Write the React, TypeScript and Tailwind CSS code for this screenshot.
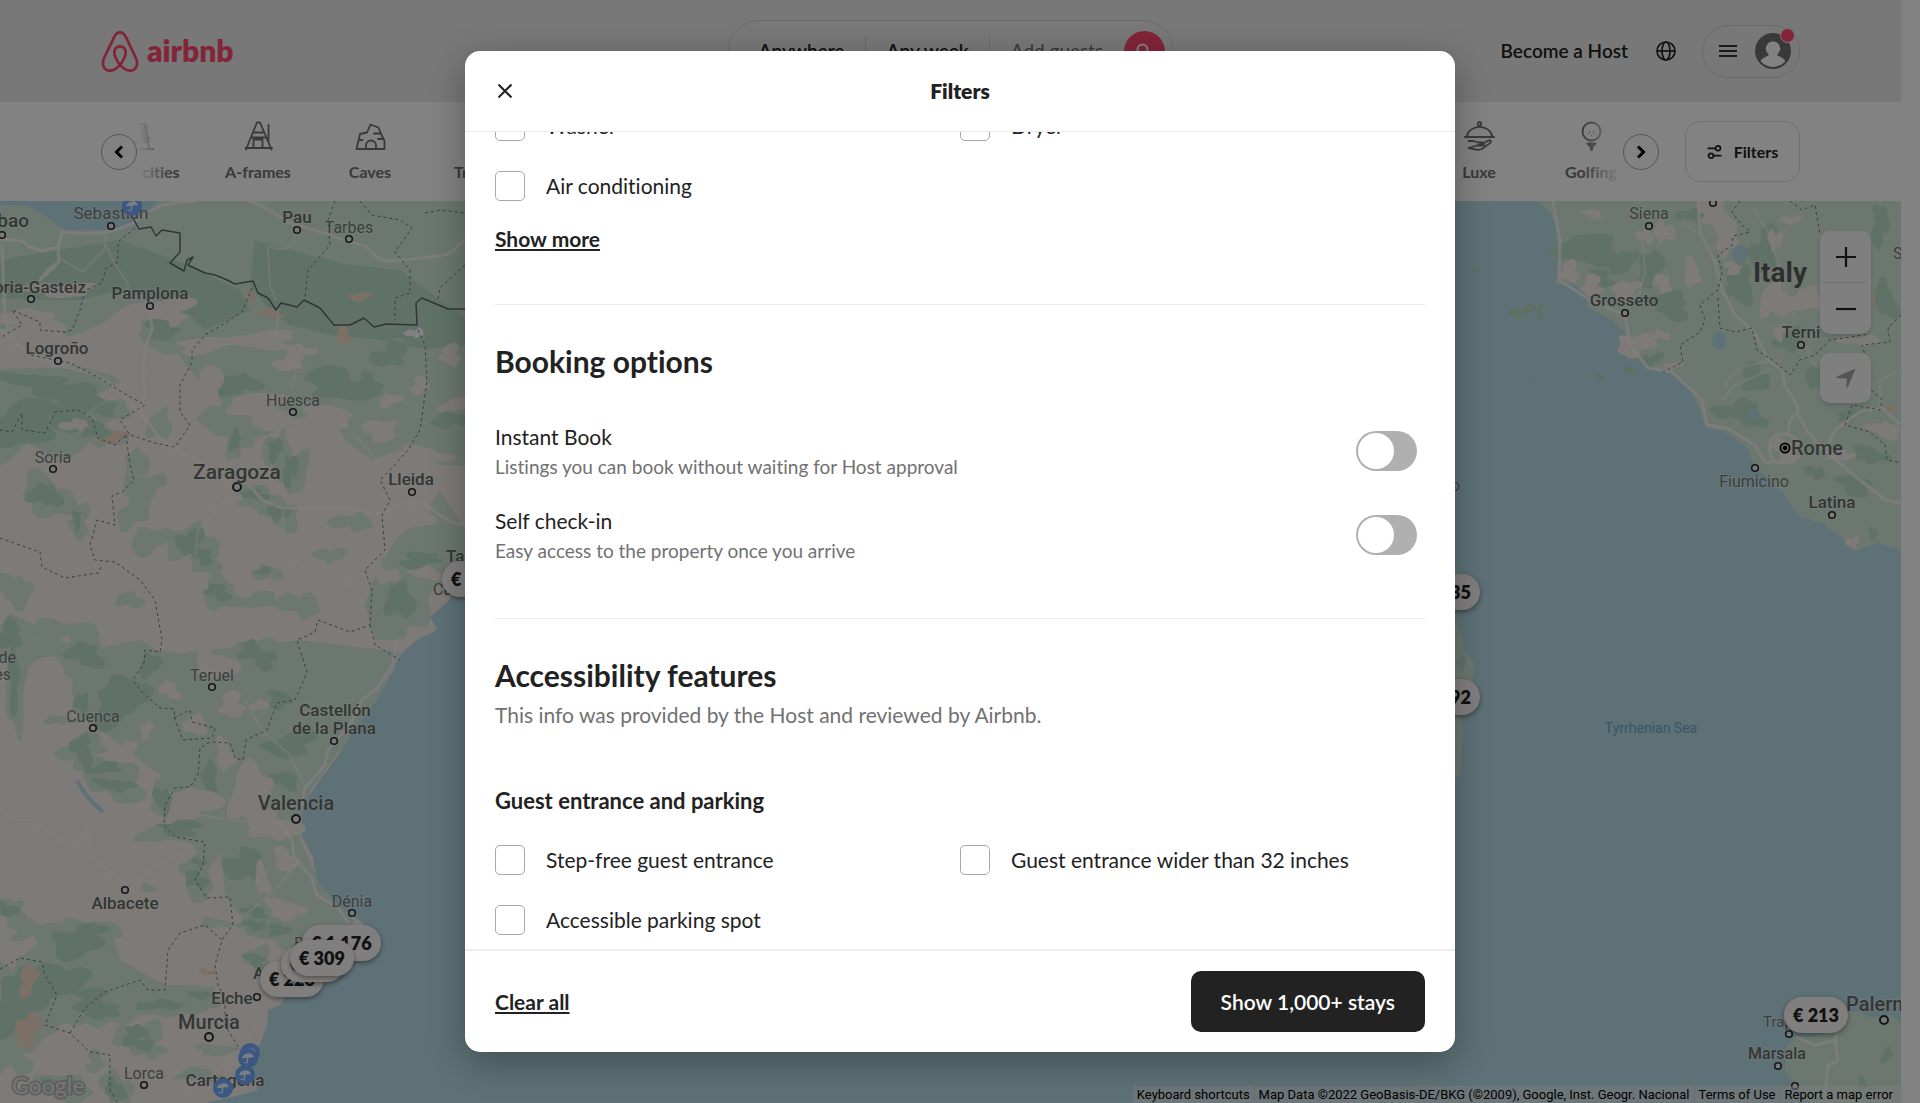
import type { ReactNode } from "react";

/* ---------- map data (map canvas units, top edge at y = 201) ---------- */

type Anchor = "start" | "middle" | "end";
type Label = [text: string, x: number, y: number, size: number, weight: number, anchor?: Anchor];

const LABELS: Label[] = [
  ["Bilbao", 29, 220, 19, 500, "end"],
  ["Sebastián", 111, 213, 17, 400],
  ["Pau", 297, 217, 17, 500],
  ["Tarbes", 349, 227, 16, 400],
  ["Vitoria-Gasteiz", 86, 287, 17, 500, "end"],
  ["Pamplona", 150, 293, 17, 500],
  ["Logroño", 57, 348, 17, 500],
  ["Huesca", 293, 400, 16, 400],
  ["Soria", 53, 457, 16, 400],
  ["Zaragoza", 237, 472, 21, 500],
  ["Lleida", 411, 479, 17, 500],
  ["Tarragona", 446, 556, 17, 500, "start"],
  ["Cambrils", 433, 589, 16, 400, "start"],
  ["Alcalá de", 16, 657, 16, 400, "end"],
  ["Henares", 11, 674, 16, 400, "end"],
  ["Teruel", 212, 675, 16, 400],
  ["Cuenca", 93, 716, 16, 400],
  ["Castellón", 335, 710, 17, 500],
  ["de la Plana", 334, 728, 17, 500],
  ["Valencia", 296, 803, 20, 500],
  ["Albacete", 125, 903, 17, 500],
  ["Dénia", 352, 901, 16, 400],
  ["Benidorm", 294, 943, 16, 400, "start"],
  ["Alicante", 253, 973, 17, 500, "start"],
  ["Elche", 232, 998, 17, 500],
  ["Murcia", 209, 1022, 20, 500],
  ["Lorca", 144, 1073, 16, 400],
  ["Cartagena", 225, 1080, 17, 500],
  ["Siena", 1649, 213, 16, 400],
  ["Grosseto", 1624, 300, 17, 500],
  ["Terni", 1801, 332, 17, 500],
  ["Rome", 1791, 448, 20, 500, "start"],
  ["Fiumicino", 1754, 481, 16, 400],
  ["Latina", 1832, 502, 17, 500],
  ["Spoleto", 1893, 253, 16, 400, "start"],
  ["Ajaccio", 1460, 485, 16, 400, "end"],
  ["Trapani", 1763, 1022, 15, 400, "start"],
  ["Marsala", 1777, 1053, 16, 500],
  ["Palermo", 1846, 1004, 20, 500, "start"],
];

const TOWNS: [number, number][] = [
  [2, 235], [111, 226], [297, 230], [349, 239], [31, 299], [150, 306], [58, 361], [293, 412],
  [53, 469], [412, 492], [212, 687], [93, 728], [334, 741], [125, 890], [352, 913], [257, 997],
  [144, 1085], [1649, 226], [1713, 203], [1625, 313], [1801, 345], [1755, 468], [1832, 515],
  [1789, 1034], [1778, 1066], [1795, 1086],
];

const CITIES: [number, number][] = [[237, 487], [296, 819], [209, 1037], [1884, 1020]];

const DARK = "#bddfca";
const MID = "#d3ead9";
const TAN = "#f7f0ec";
const PALE = "#ffffff";
const ROSE = "#f3dac9";
const WATER = "#b6dde8";

type Patch = [x: number, y: number, rx: number, ry: number, fill: string];

const SPAIN_PATCHES: Patch[] = [
  [30, 320, 30, 12, TAN], [60, 290, 28, 9, TAN], [165, 312, 32, 12, TAN], [70, 395, 36, 14, DARK],
  [20, 425, 34, 26, DARK], [70, 420, 26, 12, DARK], [30, 380, 30, 8, DARK], [75, 425, 12, 7, TAN],
  [112, 437, 14, 7, ROSE], [106, 410, 12, 6, DARK], [162, 330, 18, 9, DARK], [205, 345, 26, 9, TAN],
  [265, 340, 36, 8, TAN], [290, 362, 14, 10, TAN], [238, 385, 20, 12, DARK], [340, 385, 34, 16, DARK],
  [370, 385, 9, 14, DARK], [390, 355, 18, 12, DARK], [300, 350, 14, 6, TAN], [205, 390, 18, 22, TAN],
  [262, 410, 34, 16, TAN], [320, 420, 32, 14, TAN], [390, 400, 12, 6, TAN], [420, 385, 9, 8, TAN],
  [380, 430, 20, 9, TAN], [425, 455, 24, 8, TAN], [450, 355, 12, 9, TAN], [452, 420, 18, 9, DARK],
  [456, 405, 14, 8, TAN], [270, 313, 11, 5, ROSE], [251, 297, 4, 8, ROSE], [360, 297, 9, 5, ROSE],
  [343, 335, 8, 8, ROSE], [415, 333, 8, 5, PALE], [235, 440, 6, 10, DARK], [275, 450, 6, 14, DARK],
  [290, 470, 7, 16, DARK], [160, 425, 10, 18, MID], [97, 432, 12, 8, DARK], [45, 495, 15, 13, DARK],
  [77, 520, 5, 9, DARK], [135, 470, 12, 22, MID], [150, 485, 16, 10, MID], [135, 510, 16, 18, MID],
  [150, 540, 22, 12, MID], [190, 542, 12, 14, DARK], [203, 556, 10, 8, DARK],
  [255, 495, 14, 5, DARK], [278, 512, 10, 9, DARK], [264, 571, 7, 4, DARK], [218, 592, 12, 8, DARK],
  [260, 600, 16, 10, MID], [300, 605, 18, 14, MID], [352, 522, 18, 10, MID], [330, 555, 14, 8, MID],
  [420, 515, 24, 10, TAN], [440, 510, 10, 8, MID], [385, 575, 12, 10, TAN], [425, 572, 16, 8, TAN],
  [400, 600, 12, 22, DARK], [420, 560, 22, 7, DARK], [15, 590, 16, 18, MID], [60, 630, 30, 12, MID],
  [10, 635, 14, 12, DARK], [130, 600, 12, 9, MID], [330, 625, 14, 10, TAN],
  [14, 680, 6, 30, DARK], [85, 655, 18, 12, DARK], [120, 700, 24, 26, DARK], [82, 703, 6, 12, DARK],
  [60, 720, 14, 5, MID], [80, 745, 12, 8, DARK], [85, 758, 8, 12, DARK], [105, 768, 14, 7, DARK],
  [128, 750, 9, 9, TAN], [146, 730, 6, 9, TAN], [115, 785, 18, 7, DARK],
  [150, 665, 12, 10, DARK], [170, 690, 10, 9, TAN], [215, 665, 18, 16, TAN], [232, 705, 14, 11, TAN],
  [195, 725, 15, 8, TAN], [250, 650, 12, 8, DARK], [260, 705, 8, 6, TAN], [225, 755, 10, 14, TAN],
  [280, 700, 14, 8, DARK], [290, 745, 22, 14, DARK], [285, 780, 12, 10, DARK], [265, 660, 14, 8, DARK],
  [210, 780, 9, 16, DARK], [250, 790, 24, 22, TAN], [270, 825, 26, 16, TAN], [190, 805, 24, 20, TAN],
  [163, 800, 8, 14, DARK], [180, 828, 24, 7, DARK], [245, 865, 16, 20, DARK], [196, 880, 11, 9, DARK],
  [200, 862, 7, 5, DARK], [218, 878, 7, 20, TAN], [262, 880, 8, 14, TAN], [285, 860, 10, 14, TAN],
  [255, 912, 12, 6, DARK], [278, 930, 9, 8, DARK], [285, 910, 16, 12, TAN], [255, 925, 12, 5, DARK],
  [215, 923, 13, 6, MID], [255, 960, 10, 7, DARK], [235, 975, 18, 10, TAN], [8, 910, 9, 8, DARK],
  [148, 888, 7, 5, MID], [28, 930, 16, 9, MID], [75, 945, 20, 18, DARK], [90, 930, 14, 8, DARK],
  [60, 980, 22, 20, DARK], [95, 1000, 26, 10, DARK], [20, 1000, 22, 34, DARK], [28, 980, 9, 15, ROSE],
  [28, 1030, 13, 16, ROSE], [15, 1060, 16, 14, MID], [70, 1040, 20, 12, TAN], [130, 1000, 26, 8, MID],
  [160, 1005, 20, 6, DARK], [105, 1012, 14, 8, DARK], [135, 1035, 12, 10, DARK], [145, 1045, 8, 8, DARK],
  [200, 995, 10, 5, DARK], [215, 1050, 16, 7, MID], [165, 1060, 16, 6, TAN], [95, 1062, 10, 10, MID],
  [115, 1090, 9, 12, DARK], [60, 1085, 16, 8, DARK], [205, 965, 16, 10, TAN], [200, 1075, 20, 8, MID],
  [207, 972, 8, 3, ROSE], [245, 1082, 13, 8, TAN],
];

const ITALY_PATCHES: Patch[] = [
  [1590, 250, 26, 20, DARK], [1620, 262, 14, 14, DARK], [1600, 278, 14, 8, DARK], [1570, 272, 11, 9, TAN],
  [1593, 214, 9, 5, TAN], [1645, 236, 8, 7, TAN], [1664, 232, 9, 12, TAN], [1650, 268, 11, 20, DARK],
  [1592, 286, 12, 9, TAN], [1625, 290, 16, 8, TAN], [1663, 284, 9, 10, TAN], [1692, 273, 9, 12, TAN],
  [1715, 215, 16, 18, TAN], [1728, 238, 10, 18, TAN], [1690, 215, 12, 7, DARK], [1740, 285, 16, 16, DARK],
  [1733, 268, 9, 6, TAN], [1765, 250, 14, 22, DARK], [1790, 220, 9, 5, TAN], [1775, 240, 6, 12, TAN],
  [1805, 300, 16, 14, TAN], [1775, 300, 12, 22, TAN], [1790, 340, 12, 14, DARK], [1780, 332, 7, 7, TAN],
  [1670, 305, 22, 12, DARK], [1635, 345, 16, 13, TAN], [1660, 335, 9, 5, TAN], [1650, 360, 12, 7, DARK],
  [1672, 366, 8, 4, TAN], [1755, 378, 16, 12, DARK],
  [1735, 410, 20, 10, DARK], [1752, 420, 14, 8, DARK], [1860, 340, 18, 6, TAN], [1885, 300, 12, 18, DARK],
  [1880, 225, 10, 18, DARK], [1820, 375, 12, 16, DARK], [1785, 450, 12, 11, TAN], [1815, 472, 10, 7, DARK],
  [1840, 455, 18, 5, TAN], [1855, 485, 18, 10, DARK], [1885, 430, 16, 8, TAN], [1892, 409, 6, 4, ROSE],
  [1870, 455, 18, 8, DARK], [1853, 542, 6, 6, TAN], [1873, 533, 6, 5, DARK], [1850, 415, 14, 6, DARK],
  [1872, 302, 3, 9, ROSE],
];

const ROADS: string[] = [
  "M0 240 C14 240 20 238 28 246 L42 251 L58 247 L62 232 L70 232 C95 236 120 232 138 220 C150 207 165 203 195 201",
  "M58 262 L48 270 L40 280 M2 245 L5 320 L16 345 M58 248 L59 262 L46 275",
  "M250 201 C275 210 285 224 300 226 C325 232 350 243 365 246 C378 258 380 262 392 261 L440 256 C455 254 455 245 465 240",
  "M150 310 L152 330 C142 350 142 370 145 395 L140 412 L160 438 L195 460 L225 480 M0 330 L30 355 L65 367 L95 374 C115 385 125 398 140 412",
  "M250 486 L262 500 L282 508 L345 508 L380 514 C400 505 405 500 425 504 C440 514 448 524 465 525",
  "M398 640 L392 665 L378 688 L362 700 L350 725 L328 750 L325 765 L305 788 L302 805",
  "M278 820 L292 840 L294 858 L312 878 L317 895 L338 908 L348 922",
  "M1553 201 L1560 240 L1559 280 L1590 300 L1625 315 L1630 345 L1648 368 L1672 372 L1702 400 L1707 425 L1727 428 L1755 445 L1765 462 L1790 462",
  "M1698 201 L1700 232 L1715 262 L1722 290 L1735 315 L1755 333 L1768 360 L1782 370 L1785 386 L1797 405 L1798 415 L1808 432 L1820 446 L1850 472 L1885 500 L1901 503",
  "M1770 451 C1768 430 1785 432 1795 438 C1805 450 1800 462 1785 463 C1775 464 1770 458 1770 451 M1788 435 L1790 420 L1798 412",
  "M1826 450 L1835 430 L1860 412 L1882 408 L1895 420 L1901 424",
  "M1797 1037 L1815 1045 L1835 1040 L1838 1060 L1828 1066 L1825 1095 M1838 1028 L1835 1040",
];

const MINOR_ROADS: string[] = [
  "M296 234 C292 250 285 252 268 246 L270 285 L276 300 M278 310 L277 340 M297 352 C297 370 295 380 291 388",
  "M106 245 L115 265 L128 283 L127 296 M60 258 L82 272 L104 250 L106 230",
  "M283 510 L284 550 C300 570 330 580 350 585 M225 500 L198 530 L195 555 M355 435 L385 470",
  "M0 810 L14 820 L32 820 L60 840 L90 856 L125 885 M90 850 C88 820 82 815 74 795",
  "M245 700 L262 730 L290 755 L304 785 M300 860 L275 890 L245 915 L210 930",
  "M200 815 L230 820 L245 822 M130 890 L150 870 L195 845",
  "M247 1000 L255 1020 L250 1040 M175 1095 L210 1075 L235 1060",
  "M1643 242 L1645 270 L1640 292 L1625 310 M1683 222 L1695 232",
  "M1755 210 L1770 235 L1780 270 L1795 320 M1805 345 L1815 365 M1880 408 L1880 380 L1901 370",
  "M1725 388 C1730 370 1745 362 1780 361 M1770 370 L1735 385 L1722 400",
];

const REGION_LINES: string[] = [
  "M135 228 L118 242 L118 262 L106 268 L102 283 L85 290 L80 310 L72 330 L65 332 L40 330 L40 322 L12 310 L22 325 L0 338",
  "M335 201 L328 220 L330 245 L308 270 L305 297",
  "M360 201 L372 215 L400 220 L412 228 L395 252 L410 270 L410 293 L395 298 L395 320 M425 213 L440 210 L465 213",
  "M465 265 L440 288 L438 300 M252 288 L242 312 L222 325 L205 335 L192 350 L192 362 L180 385 L180 412 L190 425 L175 447 L155 443 L130 435 L120 420 L145 405 L118 390 L100 378 L70 363 L30 355",
  "M126 435 L130 465 L134 480 L122 492 L112 496 L115 525 L97 520 L90 545 L95 560 L115 562 L140 580 L155 600 L162 640 L160 652 L145 650 L144 663 L133 680 L142 692 L160 708 L174 709 L175 720 L183 740 L212 738 L215 728 L192 722 L190 710 L174 718",
  "M0 538 L20 545 L40 552 L42 567 L65 578 L98 573 L102 565 M0 430 L12 432 L22 413 L22 430 L45 433 L55 412 L78 410 L92 418 L98 438 L115 445 L126 435",
  "M418 330 L425 345 L427 380 L420 430 L408 450 L390 470 L380 480 L390 500 L382 515 L385 550 L365 570 L372 590 L370 625 L350 632 L318 620 L315 632 L297 640 L307 672 L295 700 L277 703 L267 730 L246 740 L243 760 L235 758 L230 743 L210 742 L200 748 L198 775 L190 787 L175 788 L165 805 L164 825 L175 837 L205 842 L203 865 L195 880 L207 898 L230 897 L233 925 L222 940 L215 965 L218 985 L225 1000 L225 1025 L240 1050",
  "M370 625 L375 645 L400 660 M0 969 L20 958 L42 962 L45 975 L57 995 L45 1025 L70 1033 L90 1052 L110 1055 L110 1090 L118 1103",
  "M70 1033 L85 1008 L105 992 L140 980 L148 990 L165 990 L168 950 L180 933 L205 925 L222 940",
  "M1740 201 L1732 212 L1742 225 L1750 232 L1733 236 L1732 245 L1718 255 L1722 272 L1718 290 L1700 305 L1705 320 L1700 332 L1680 345 L1683 362 L1663 372",
  "M1718 298 L1720 328 L1735 332 L1752 328 L1757 350 L1775 362 L1790 375 L1800 360 L1815 355 L1830 340 L1870 334 M1790 201 L1802 210 L1815 205 L1820 235",
  "M1901 315 L1888 328 L1890 342 L1862 345 L1865 355 M1871 390 L1882 400 L1880 410 L1852 405 L1845 425 L1870 432 L1885 445 L1887 460 L1901 463",
];

const FRENCH_BORDER =
  "M133 218 L139 229 L151 227 L156 236 L162 230 L180 233 L180 252 L170 263 L184 271 L187 260 L193 257 L188 265 L205 273 L215 275 L225 279 L235 284 L253 281 L258 293 L268 298 L276 310 L281 303 L297 307 L304 300 L320 308 L334 325 L350 325 L364 318 L374 327 L386 324 L417 325 L416 303 L422 298 L448 309 L465 309";

/** Uneven closed outline around a centre; the wobble is derived from the centre. */
function blob(x: number, y: number, rx: number, ry: number) {
  const n = 20;
  const pts = Array.from({ length: n }, (_, i) => {
    const a = (i / n) * Math.PI * 2;
    const r = 1 + 0.26 * Math.sin(2 * a + x * 1.7) + 0.22 * Math.sin(3 * a + y * 0.9) + 0.17 * Math.sin(5 * a + x + y) + 0.1 * Math.sin(7 * a + x * 0.6);
    return [x + Math.cos(a) * rx * r, y + Math.sin(a) * ry * r];
  });
  const mid = (i: number) => {
    const [ax, ay] = pts[i % n];
    const [bx, by] = pts[(i + 1) % n];
    return `${((ax + bx) / 2).toFixed(1)} ${((ay + by) / 2).toFixed(1)}`;
  };
  return `M${mid(n - 1)}${pts.map(([px, py], i) => `Q${px.toFixed(1)} ${py.toFixed(1)} ${mid(i)}`).join("")}Z`;
}

function Patches({ items }: { items: Patch[] }) {
  return (
    <>
      {items.map(([x, y, rx, ry, fill], i) => (
        <path key={i} d={blob(x, y, rx, ry)} fill={fill} />
      ))}
    </>
  );
}

/** Lighter vegetation that surrounds every dense patch. */
function Undergrowth({ items }: { items: Patch[] }) {
  return (
    <>
      {items
        .filter(([, , , , fill]) => fill === DARK)
        .map(([x, y, rx, ry], i) => (
          <path key={i} d={blob(x + 3, y + 2, rx * 1.5 + 3, ry * 1.4 + 3)} fill={MID} />
        ))}
    </>
  );
}

function MapCanvas() {
  return (
    <svg viewBox="0 201 1901 902" preserveAspectRatio="xMidYMid slice" className="block h-full w-full" aria-label="Map of stays">
      <rect x="0" y="201" width="1901" height="902" fill={WATER} />

      {/* Iberian peninsula and southern France */}
      <path
        fill={TAN}
        d="M0 205 L25 206 L45 216 L66 231 L90 230 L112 230 L132 222 L148 213 L158 201 L640 201 L640 500 L465 584 L445 604 L430 617 L437 630 L417 640 L400 655 L392 672 L377 700 L357 723 L340 753 L320 780 L303 805 L301 835 L313 857 L317 880 L333 903 L363 923 L360 935 L320 970 L290 990 L280 1005 L268 1010 L267 1025 L260 1045 L240 1052 L247 1075 L258 1090 L233 1097 L205 1103 L0 1103 Z"
      />
      <path
        fill={MID}
        d="M0 205 L25 206 L45 216 L66 231 L112 230 L132 222 L148 213 L158 201 L640 201 L640 470 L440 465 L400 450 L372 460 L345 440 L335 420 L295 425 L250 440 L215 435 L195 420 L215 400 L190 370 L165 335 L195 325 L180 312 L150 300 L125 306 L100 325 L70 337 L40 318 L0 330 Z"
      />
      <path fill={DARK} d="M0 260 L60 250 L120 240 L180 262 L240 290 L250 310 L205 330 L190 318 L150 296 L120 290 L80 300 L40 300 L0 298 Z" />
      <path fill={DARK} d="M255 240 L310 255 L350 265 L400 270 L440 300 L465 318 L465 345 L420 350 L380 340 L330 335 L290 325 L270 312 L250 285 Z" />
      <path fill={MID} d="M440 490 L465 530 L465 560 L440 580 L420 610 L400 640 L375 640 L365 605 L375 575 L395 540 L420 520 Z" />
      <path
        fill={MID}
        d="M20 640 L60 640 L90 650 L140 640 L165 655 L300 640 L400 652 L377 700 L340 750 L303 800 L300 840 L320 885 L355 922 L310 955 L260 935 L235 910 L205 860 L165 815 L160 775 L120 745 L75 710 L50 700 L20 665 Z"
      />
      <path fill={TAN} d="M22 670 L40 658 L55 656 L72 680 L74 705 L60 740 L65 790 L40 800 L20 760 Z" />
      <path fill={MID} d="M60 925 L110 925 L120 960 L165 985 L200 985 L210 1005 L175 1015 L130 1000 L100 1020 L60 1030 L20 1050 L0 1075 L0 985 L30 950 Z" />
      <Undergrowth items={SPAIN_PATCHES} />
      <Patches items={SPAIN_PATCHES} />
      <path d="M77 781 L88 798 L103 812" stroke={WATER} strokeWidth="4" fill="none" />

      {/* Italy */}
      <path
        fill={MID}
        d="M1537 201 L1550 212 L1555 223 L1558 253 L1557 277 L1555 285 L1573 284 L1587 293 L1587 308 L1607 317 L1627 333 L1633 353 L1647 368 L1670 373 L1690 390 L1700 410 L1705 427 L1727 433 L1747 447 L1753 463 L1770 480 L1783 493 L1800 517 L1823 523 L1847 543 L1853 552 L1877 543 L1901 550 L1901 201 Z"
      />
      <Patches items={ITALY_PATCHES} />
      <ellipse cx="1740" cy="254" rx="8" ry="9" fill={WATER} />
      <ellipse cx="1719" cy="341" rx="7" ry="9" fill={WATER} />
      <ellipse cx="1754" cy="414" rx="6" ry="5" fill={WATER} />

      {/* Tuscan islands, Sardinia, Sicily */}
      <Patches
        items={[
          [1515, 313, 6, 4, "#b8dcb8"], [1528, 309, 6, 5, "#b8dcb8"], [1540, 311, 3, 7, "#b8dcb8"], [1475, 269, 4, 2, "#b8dcb8"],
          [1630, 370, 6, 3, "#b8dcb8"], [1600, 378, 4, 3, "#b8dcb8"], [1532, 381, 2, 1, "#b8dcb8"],
        ]}
      />
      <path fill={MID} d="M1440 620 L1457 624 L1463 640 L1464 650 L1474 663 L1472 690 L1461 718 L1463 730 L1460 775 L1440 790 Z" />
      <path fill={MID} d="M1901 1024 L1890 1014 L1870 1018 L1862 1012 L1848 1012 L1838 1028 L1815 1037 L1797 1036 L1786 1046 L1785 1070 L1795 1085 L1811 1103 L1901 1103 Z" />
      <Patches items={[[1887, 1055, 6, 7, DARK], [1862, 1083, 5, 6, DARK], [1462, 662, 4, 6, DARK]]} />

      <g fill="none" stroke="#fff8f8" strokeLinejoin="round" strokeLinecap="round">
        <g strokeWidth="3" opacity="0.75">
          {ROADS.map((d) => (
            <path key={d} d={d} />
          ))}
        </g>
        <g strokeWidth="2" opacity="0.5">
          {MINOR_ROADS.map((d) => (
            <path key={d} d={d} />
          ))}
        </g>
      </g>
      <g fill="none" stroke="#70807a" strokeWidth="1" strokeDasharray="3 3">
        {REGION_LINES.map((d) => (
          <path key={d} d={d} />
        ))}
      </g>
      <path d={FRENCH_BORDER} fill="none" stroke="#5f6b66" strokeWidth="1.5" strokeLinejoin="round" />

      <g fill="#efefef" stroke="#2e2e2e" strokeWidth="1.6">
        {TOWNS.map(([x, y]) => (
          <circle key={`${x}-${y}`} cx={x} cy={y} r="3.3" />
        ))}
        {CITIES.map(([x, y]) => (
          <circle key={`${x}-${y}`} cx={x} cy={y} r="4" strokeWidth="2" />
        ))}
        <circle cx="1785" cy="448" r="4.6" strokeWidth="1.8" stroke="#000" />
        <circle cx="1785" cy="448" r="1.6" fill="#000" stroke="#000" />
      </g>

      <g fontFamily="Roboto, sans-serif" stroke="#ffffff" strokeOpacity="0.35" strokeWidth="2" paintOrder="stroke" dominantBaseline="central">
        {LABELS.map(([text, x, y, size, weight, anchor = "middle"]) => (
          <text key={text} x={x} y={y} fontSize={size} fontWeight={weight} fill={weight === 400 ? "#757b76" : "#666b67"} textAnchor={anchor}>
            {text}
          </text>
        ))}
        <text x="1780" y="272" fontSize="28" fontWeight="700" fill="#5c5c5c" textAnchor="middle">
          Italy
        </text>
        <text x="1651" y="728" fontSize="14" fill="#6cabc4" strokeOpacity="0" textAnchor="middle">
          Tyrrhenian Sea
        </text>
      </g>
      <text x="12" y="1094" fontFamily="Lato, sans-serif" fontSize="23" fontWeight="600" fill="#e4e4e4" stroke="#b4b4b4" strokeWidth="3" paintOrder="stroke">
        Google
      </text>
    </svg>
  );
}

/* ---------- icons ---------- */

function BeloMark() {
  return (
    <svg viewBox="2.5 1 27 30" className="h-[41px] w-[38px]" fill="#ff4a70" aria-hidden="true">
      <path d="M16 1c2.008 0 3.463.963 4.751 3.269l.533 1.025c1.954 3.83 6.114 12.54 7.1 14.836l.145.353c.667 1.591.91 2.472.96 3.396l.01.415.001.228c0 4.062-2.877 6.478-6.357 6.478-2.224 0-4.556-1.258-6.709-3.386l-.257-.26-.172-.179h-.011l-.176.185c-2.044 2.1-4.267 3.42-6.414 3.615l-.28.019-.267.006C5.377 31 2.5 28.584 2.5 24.522l.005-.469c.026-.928.23-1.768.83-3.244l.216-.524c.966-2.298 6.083-12.989 7.707-16.034C12.537 1.963 13.992 1 16 1zm0 2c-1.239 0-2.053.539-2.987 2.21l-.523 1.008c-1.926 3.776-6.06 12.43-7.031 14.692l-.345.836c-.427 1.071-.573 1.655-.605 2.24l-.009.33v.206C4.5 27.395 6.411 29 8.857 29c1.773 0 3.87-1.236 5.831-3.354-2.295-2.938-3.855-6.45-3.855-8.91 0-2.913 1.933-5.386 5.178-5.42 3.223.034 5.156 2.507 5.156 5.42 0 2.456-1.555 5.96-3.855 8.907C19.277 27.766 21.37 29 23.142 29c2.447 0 4.358-1.605 4.358-4.478l-.004-.411c-.019-.672-.17-1.296-.714-2.62l-.248-.6c-1.065-2.478-5.993-12.768-7.538-15.664C18.053 3.539 17.24 3 16 3zm.01 10.316c-2.01.021-3.177 1.514-3.177 3.42 0 1.797 1.18 4.58 2.955 7.044l.212.287.174-.234c1.73-2.385 2.898-5.066 2.989-6.875l.006-.221c0-1.906-1.167-3.4-3.159-3.421z" />
    </svg>
  );
}

function CategoryIcon({ children }: { children: ReactNode }) {
  return (
    <svg viewBox="0 0 31 31" className="size-[31px]" fill="none" stroke="currentColor" strokeWidth="1.8" strokeLinejoin="round" strokeLinecap="round" aria-hidden="true">
      {children}
    </svg>
  );
}

const towerIcon = (
  <CategoryIcon>
    <path d="M17 3 H23 L21 6 H24 M18 9 L24 8 M19 12 L24 11 M20 15 L25 14 M20 18 L26 17 M21 21 L26 20 M10 3 L14 27 M22 3 L26 27 M8 28 H31" />
  </CategoryIcon>
);
const aFrameIcon = (
  <CategoryIcon>
    <path d="M14 1.5 L3 28.5 M17 1.5 L28.5 28.5 M14 1.5 H17 M2.5 27 H29 M10 11.5 H20.5 M8 16.5 H23 M10.5 27 V18.5 H19.5 V27 M25.5 4 V21" />
  </CategoryIcon>
);
const caveIcon = (
  <CategoryIcon>
    <path d="M1.5 28 L5 13 L12 11.5 L15.5 3.5 L23.5 6.5 L27 15 L29.5 20 V28 Z M11 28 V24.5 a5 5 0 0 1 10 0 V28 M19 12.5 H25.5 M23 18 H28.5 M4 19 H7.5" />
  </CategoryIcon>
);
const palmIcon = (
  <CategoryIcon>
    <path d="M15 28 C17 20 17 14 15 9 M15 9 C9 4 5 7 4 12 M15 9 C21 4 26 7 27 12 M4 28 H27" />
  </CategoryIcon>
);
const luxeIcon = (
  <CategoryIcon>
    <circle cx="15.5" cy="2.8" r="1.8" />
    <path d="M0.8 16 H30.2 M2.8 15.5 a12.8 11 0 0 1 25.4 0 M4.5 20 H9.5 L14 21.5 H18.5 a1.6 1.6 0 0 1 0 3.2 H13 M19 22.5 L24.5 19.5 c2-.8 3.2 1.3 1.5 2.6 L18 28 L14.5 29 L4.5 27 Z" />
  </CategoryIcon>
);
const golfIcon = (
  <CategoryIcon>
    <circle cx="15.5" cy="10.5" r="9" />
    <path d="M12.3 12.5 v.1 M15.5 14.5 v.1 M18.7 12.5 v.1 M13.8 10.8 v.1 M17.2 10.8 v.1" strokeWidth="1.2" />
    <path d="M11.5 22.5 H19.5 C19 24.5 17 24.5 16.5 26 L16 29 H15 L14.5 26 C14 24.5 12 24.5 11.5 22.5 Z" fill="currentColor" />
  </CategoryIcon>
);

function Chevron({ flip = false }: { flip?: boolean }) {
  return (
    <svg viewBox="0 0 12 16" className="h-4 w-3" fill="none" stroke="#000" strokeWidth="3" aria-hidden="true">
      {flip ? <path d="M3 2.5 L8.5 8 L3 13.5" /> : <path d="M9 2.5 L3.5 8 L9 13.5" />}
    </svg>
  );
}

/* ---------- page parts ---------- */

function Header() {
  return (
    <header className="grid h-[102px] shrink-0 grid-cols-[1fr_auto_1fr] items-center bg-[#ececec] px-[101px]">
      <a href="#home" className="flex items-center gap-2 justify-self-start" aria-label="airbnb homepage">
        <BeloMark />
        <span className="pb-0.5 text-[30px] leading-9 font-extrabold text-[#ff4a70]">airbnb</span>
      </a>
      <div className="flex h-[62px] w-[446px] items-center rounded-full border border-[#cfcfcf] pr-2 pl-[30px] text-[19px]">
        <button className="pr-[21px] font-semibold">Anywhere</button>
        <span className="h-[30px] w-px bg-[#cfcfcf]" />
        <button className="px-5 font-semibold">Any week</button>
        <span className="h-[30px] w-px bg-[#cfcfcf]" />
        <button className="pl-[21px] text-[#717171]">Add guests</button>
        <button className="ml-auto flex size-[41px] items-center justify-center rounded-full bg-[#ff4a70]" aria-label="Search">
          <svg viewBox="0 0 16 16" className="size-4" fill="none" stroke="#fff" strokeWidth="2" aria-hidden="true">
            <circle cx="6.5" cy="6.5" r="5" />
            <path d="M10.5 10.5 L15 15" />
          </svg>
        </button>
      </div>
      <div className="flex items-center justify-self-end">
        <a href="#host" className="text-[19px] leading-6 font-semibold">Become a Host</a>
        <button className="ml-7" aria-label="Choose a language">
          <svg viewBox="0 0 20 20" className="size-5" fill="none" stroke="#222" strokeWidth="1.7" aria-hidden="true">
            <circle cx="10" cy="10" r="9" />
            <path d="M1 10 H19" />
            <ellipse cx="10" cy="10" rx="4" ry="9" />
          </svg>
        </button>
        <button className="relative ml-[26px] flex h-[53px] w-[98px] items-center justify-between rounded-full border border-[#cfcfcf] pr-2 pl-4" aria-label="Main menu">
          <svg viewBox="0 0 18 14" className="h-3.5 w-[18px]" stroke="#333" strokeWidth="2" aria-hidden="true">
            <path d="M0 2 H18 M0 7 H18 M0 12 H18" />
          </svg>
          <svg viewBox="0 0 32 32" className="size-9" aria-hidden="true">
            <circle cx="16" cy="16" r="16" fill="#717171" />
            <path d="M16 7.500 a6.300 6.300 0 0 1 4 11.200 v1.600 c3 .8 5.500 2.200 7 4.500 A14 14 0 0 1 5 24.800 c1.500-2.300 4-3.700 7-4.500 v-1.600 A6.300 6.300 0 0 1 16 7.500 Z" fill="#fff" />
          </svg>
          <span className="absolute top-0.5 right-1 size-[15px] rounded-full border border-[#ececec] bg-[#ff4a70]" />
        </button>
      </div>
    </header>
  );
}

function Category({ label, icon, className = "w-28" }: { label: string; icon: ReactNode; className?: string }) {
  return (
    <button className={`${className} flex shrink-0 flex-col items-center gap-2.5 text-[#717171]`}>
      {icon}
      <span className="text-base leading-5 font-bold whitespace-nowrap">{label}</span>
    </button>
  );
}

function CategoryBar() {
  return (
    <div className="flex h-[99px] shrink-0 items-center gap-[26px] bg-white px-[101px]">
      <nav className="relative flex h-full min-w-0 grow items-center justify-between overflow-hidden" aria-label="Categories">
        <div className="-ml-[27px] flex shrink-0">
          <Category label="Iconic cities" icon={towerIcon} className="w-32" />
          <Category label="A-frames" icon={aFrameIcon} />
          <Category label="Caves" icon={caveIcon} />
          <Category label="Tropical" icon={palmIcon} />
        </div>
        <div className="flex shrink-0 pr-3">
          <Category label="Luxe" icon={luxeIcon} />
          <Category label="Golfing" icon={golfIcon} />
        </div>
        <div className="absolute inset-y-0 left-0 flex w-[72px] items-center bg-linear-to-r from-white from-50% to-transparent">
          <button className="flex size-9 items-center justify-center rounded-full border border-[#a8a8a8] bg-white" aria-label="Previous categories">
            <Chevron />
          </button>
        </div>
        <div className="absolute inset-y-0 right-0 flex w-[76px] items-center justify-end bg-linear-to-l from-white from-50% to-transparent">
          <button className="flex size-9 items-center justify-center rounded-full border border-[#a8a8a8] bg-white" aria-label="Next categories">
            <Chevron flip />
          </button>
        </div>
      </nav>
      <button className="flex h-[61px] w-[115px] shrink-0 items-center justify-center gap-3 rounded-[15px] border border-[#dddddd] text-base font-bold">
        <svg viewBox="0 0 15 14" className="h-3.5 w-[15px]" fill="none" stroke="#222" strokeWidth="1.800" aria-hidden="true">
          <path d="M0.500 3.300 H8.500 M6.500 10.700 H14.500" />
          <circle cx="11" cy="3.300" r="2.400" />
          <circle cx="4" cy="10.700" r="2.400" />
        </svg>
        Filters
      </button>
    </div>
  );
}

function PricePin({ price, className }: { price: string; className: string }) {
  return (
    <button className={`absolute h-9 rounded-full bg-[#fdf8f8] px-[9px] text-lg leading-9 font-extrabold whitespace-nowrap shadow-[0_2px_5px_rgba(0,0,0,0.4)] ${className}`}>
      {price}
    </button>
  );
}

function BeachPin({ className }: { className: string }) {
  return (
    <span className={`absolute flex size-5 items-center justify-center rounded-full bg-[#74acff] ${className}`}>
      <svg viewBox="0 0 12 12" className="size-3" fill="none" stroke="#fff" strokeWidth="1.200" strokeLinecap="round" aria-hidden="true">
        <path d="M1 5.500 C2 1.500 9 0.500 11 4.500 Z" fill="#e8efff" />
        <path d="M6 4 L5 11 M2 10.500 h1.500" />
      </svg>
    </span>
  );
}

function MapArea() {
  return (
    <section className="relative min-h-0 grow overflow-hidden" aria-label="Map">
      <div className="absolute inset-0">
        <MapCanvas />
      </div>
      <BeachPin className="top-[-5px] left-[122px]" />
      <BeachPin className="top-[842px] left-[240px]" />
      <BeachPin className="top-[847px] left-[238px]" />
      <BeachPin className="top-[864px] left-[235px]" />
      <BeachPin className="top-[877px] left-[213px]" />
      <PricePin price="€ 145" className="top-[360px] left-[442px]" />
      <PricePin price="€ 1,176" className="top-[724px] left-[302px]" />
      <PricePin price="€ 226" className="top-[760px] left-[260px]" />
      <PricePin price="€ 280" className="top-[745px] left-[281px]" />
      <PricePin price="€ 309" className="top-[739px] left-[290px]" />
      <PricePin price="€ 135" className="top-[373px] right-[421px]" />
      <PricePin price="€ 192" className="top-[478px] right-[421px]" />
      <PricePin price="€ 213" className="top-[796px] right-[53px]" />

      <div className="absolute top-[30px] right-[30px] flex w-[51px] flex-col gap-[19px]">
        <div className="flex flex-col rounded-[10px] bg-[#fafafa] shadow-md">
          <button className="flex h-[51px] items-center justify-center" aria-label="Zoom in">
            <svg viewBox="0 0 20 20" className="size-5" stroke="#222" strokeWidth="2.200" aria-hidden="true">
              <path d="M0 10 H20 M10 0 V20" />
            </svg>
          </button>
          <span className="mx-1 h-px bg-[#dddddd]" />
          <button className="flex h-[51px] items-center justify-center" aria-label="Zoom out">
            <svg viewBox="0 0 20 20" className="size-5" stroke="#222" strokeWidth="2.200" aria-hidden="true">
              <path d="M0 10 H20" />
            </svg>
          </button>
        </div>
        <button className="flex h-[50px] items-center justify-center rounded-[10px] bg-[#fafafa] shadow-md" aria-label="Find my location">
          <svg viewBox="0 0 20 20" className="size-5" fill="#a5a5a5" aria-hidden="true">
            <path d="M19.500 0.500 L12 19 C11.500 20 10.500 19.500 10.500 18.500 L10.800 10.500 L1.500 10.300 C0 10.200 0 9 1 8.500 Z" />
          </svg>
        </button>
      </div>

      <div className="absolute right-0 bottom-0 flex h-[17px] items-center divide-x divide-[#cfd8da] bg-[#f5f5f5]/50 pr-1 font-[Roboto,sans-serif] text-[13px] leading-[17px] text-black">
        <button className="px-1">Keyboard shortcuts</button>
        <span className="px-1">Map Data ©2022 GeoBasis-DE/BKG (©2009), Google, Inst. Geogr. Nacional</span>
        <a href="#terms" className="px-1">Terms of Use</a>
        <a href="#report" className="px-1">Report a map error</a>
      </div>
    </section>
  );
}

/* ---------- filters dialog ---------- */

function CheckRow({ label }: { label: string }) {
  return (
    <label className="flex h-[30px] items-center gap-[21px] text-[21px] leading-7">
      <input type="checkbox" className="size-[30px] shrink-0 appearance-none rounded-[5px] border border-[#a8a8a8] checked:bg-[#222222]" />
      {label}
    </label>
  );
}

function SwitchRow({ id, title, note }: { id: string; title: string; note: string }) {
  return (
    <div className="flex items-center justify-between pr-2">
      <div>
        <label htmlFor={id} className="block text-[21px] leading-7">{title}</label>
        <p id={`${id}-note`} className="mt-1 text-[19px] leading-6 text-[#717171]">{note}</p>
      </div>
      <input
        id={id}
        type="checkbox"
        role="switch"
        aria-describedby={`${id}-note`}
        className="flex h-10 w-[61px] shrink-0 appearance-none items-center rounded-full bg-[#b0b0b0] px-0.5 before:size-9 before:rounded-full before:bg-white before:content-[''] checked:justify-end checked:bg-[#222222]"
      />
    </div>
  );
}

function FiltersDialog() {
  return (
    <div role="dialog" aria-modal="true" aria-labelledby="filters-title" className="flex h-full w-full max-w-[990px] flex-col overflow-hidden rounded-[15px] bg-white shadow-[0_10px_36px_rgba(0,0,0,0.3)]">
      <div className="grid h-[81px] shrink-0 grid-cols-[1fr_auto_1fr] items-center border-b border-[#ebebeb] px-[30px]">
        <button className="flex size-5 items-center justify-center" aria-label="Close">
          <svg viewBox="0 0 14 14" className="size-3.5" stroke="#222" strokeWidth="2" aria-hidden="true">
            <path d="M0.500 0.500 L13.500 13.500 M13.500 0.500 L0.500 13.500" />
          </svg>
        </button>
        <h1 id="filters-title" className="text-[21px] leading-7 font-extrabold">Filters</h1>
      </div>

      <div className="min-h-0 grow overflow-hidden px-[30px]">
        <section className="-mt-[21px] border-b border-[#ebebeb] pb-[51px]">
          <div className="grid grid-cols-2 gap-y-[30px]">
            <CheckRow label="Washer" />
            <CheckRow label="Dryer" />
            <CheckRow label="Air conditioning" />
          </div>
          <button className="mt-6 text-[21px] leading-7 font-bold underline">Show more</button>
        </section>

        <section className="border-b border-[#ebebeb] pt-[38px] pb-[55px]">
          <h2 className="text-3xl leading-9 font-bold">Booking options</h2>
          <div className="mt-11 flex flex-col gap-7">
            <SwitchRow id="instant-book" title="Instant Book" note="Listings you can book without waiting for Host approval" />
            <SwitchRow id="self-check-in" title="Self check-in" note="Easy access to the property once you arrive" />
          </div>
        </section>

        <section className="pt-[38px]">
          <h2 className="text-3xl leading-9 font-bold">Accessibility features</h2>
          <p className="mt-2 text-[21px] leading-7 text-[#717171]">This info was provided by the Host and reviewed by Airbnb.</p>
          <h3 className="mt-[58px] text-[22px] leading-7 font-bold">Guest entrance and parking</h3>
          <div className="mt-[30px] grid grid-cols-2 gap-y-[30px]">
            <CheckRow label="Step-free guest entrance" />
            <CheckRow label="Guest entrance wider than 32 inches" />
            <CheckRow label="Accessible parking spot" />
          </div>
        </section>
      </div>

      <div className="flex h-[103px] shrink-0 items-center justify-between border-t-2 border-[#efefef] px-[30px]">
        <button className="text-[21px] leading-7 font-bold underline">Clear all</button>
        <button className="h-[61px] rounded-[10px] bg-[#222222] px-[30px] text-[21px] font-semibold text-white">Show 1,000+ stays</button>
      </div>
    </div>
  );
}

export default function App() {
  return (
    <div className="relative flex h-screen overflow-hidden bg-white font-[Lato,sans-serif] text-[#222222] [font-variant-ligatures:none]">
      <main className="flex min-w-0 grow flex-col">
        <Header />
        <CategoryBar />
        <MapArea />
      </main>
      <div className="w-[19px] shrink-0" />
      <div className="absolute inset-0 flex items-center justify-center bg-black/49 py-[51px]">
        <FiltersDialog />
      </div>
    </div>
  );
}
